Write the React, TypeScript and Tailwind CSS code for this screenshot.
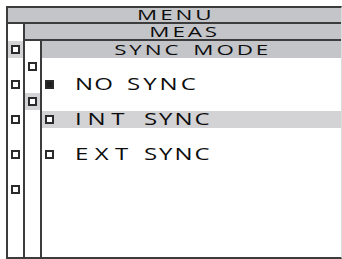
const BAR = "bg-[#c4c5c9]";
const HI = "bg-[#d3d3d5]";

function Box({ filled = false }: { filled?: boolean }) {
  return (
    <span
      className={`block h-[9px] w-[9px] shrink-0 border-2 border-[#2a2a2a] ${filled ? "bg-[#1e1e1e]" : "bg-white"}`}
    />
  );
}

function Title({ text, height, border = true }: { text: string; height: string; border?: boolean }) {
  return (
    <div className={`${height} ${BAR} ${border ? "border-b-2 border-[#3c3c3c]" : ""} flex items-center justify-center`}>
      <span className="inline-block origin-center whitespace-nowrap pl-[2px] text-[14px] leading-[12px] tracking-[1.8px] text-[#0d0d0d] [transform:scaleX(1.6)] [word-spacing:2px]">
        {text}
      </span>
    </div>
  );
}

type Item = {
  first: string;
  firstWidth: string;
  firstTracking: string;
  secondTracking: string;
  filled?: boolean;
  active?: boolean;
};

const items: Item[] = [
  { first: "NO", firstWidth: "w-[52px]", firstTracking: "tracking-[0.8px]", secondTracking: "tracking-[2px]", filled: true },
  { first: "INT", firstWidth: "w-[69px]", firstTracking: "tracking-[3.8px]", secondTracking: "tracking-[1.3px]", active: true },
  { first: "EXT", firstWidth: "w-[69px]", firstTracking: "tracking-[4.3px]", secondTracking: "tracking-[1.3px]" },
];

export default function App() {
  return (
    <div className="h-[259px] w-[342px] bg-white pl-[6px] pt-[6px] font-['Open_Sans',sans-serif]">
      <div className="flex h-[253px] w-[336px] flex-col border-b-2 border-l-2 border-r border-t-2 border-[#3c3c3c] border-r-[#dcdcdc]">
        <Title text="MENU" height="h-[16px]" />
        <div className="flex flex-1">
          <div className="flex w-[17px] flex-col gap-[18px] border-r-2 border-[#3c3c3c] pt-[17px]">
            {[0, 1, 2, 3, 4].map((i) => (
              <div key={i} className={`flex h-[17px] items-center justify-center ${i === 0 ? HI : ""}`}>
                <Box />
              </div>
            ))}
          </div>
          <div className="flex flex-1 flex-col">
            <Title text="MEAS" height="h-[17px]" />
            <div className="flex flex-1">
              <div className="flex w-[17px] flex-col gap-[18px] border-r-2 border-[#3c3c3c] pt-[17px]">
                {[0, 1].map((i) => (
                  <div key={i} className={`flex h-[17px] items-center justify-center ${i === 1 ? HI : ""}`}>
                    <Box />
                  </div>
                ))}
              </div>
              <div className="flex flex-1 flex-col">
                <Title text="SYNC MODE" height="h-[17px]" border={false} />
                <div className="flex flex-col gap-[18px] pt-[18px]">
                  {items.map((item) => (
                    <div key={item.first} className={`flex h-[17px] items-center pl-[3px] ${item.active ? HI : ""}`}>
                      <Box filled={item.filled} />
                      <div className="ml-[21px] flex items-center whitespace-nowrap text-[16px] leading-[17px] text-[#0d0d0d]">
                        <span className={`${item.firstWidth} shrink-0`}>
                          <span className={`inline-block origin-left [transform:scaleX(1.5)] ${item.firstTracking}`}>{item.first}</span>
                        </span>
                        <span className={`inline-block origin-left [transform:scaleX(1.5)] ${item.secondTracking}`}>SYNC</span>
                      </div>
                    </div>
                  ))}
                </div>
              </div>
            </div>
          </div>
        </div>
      </div>
    </div>
  );
}
